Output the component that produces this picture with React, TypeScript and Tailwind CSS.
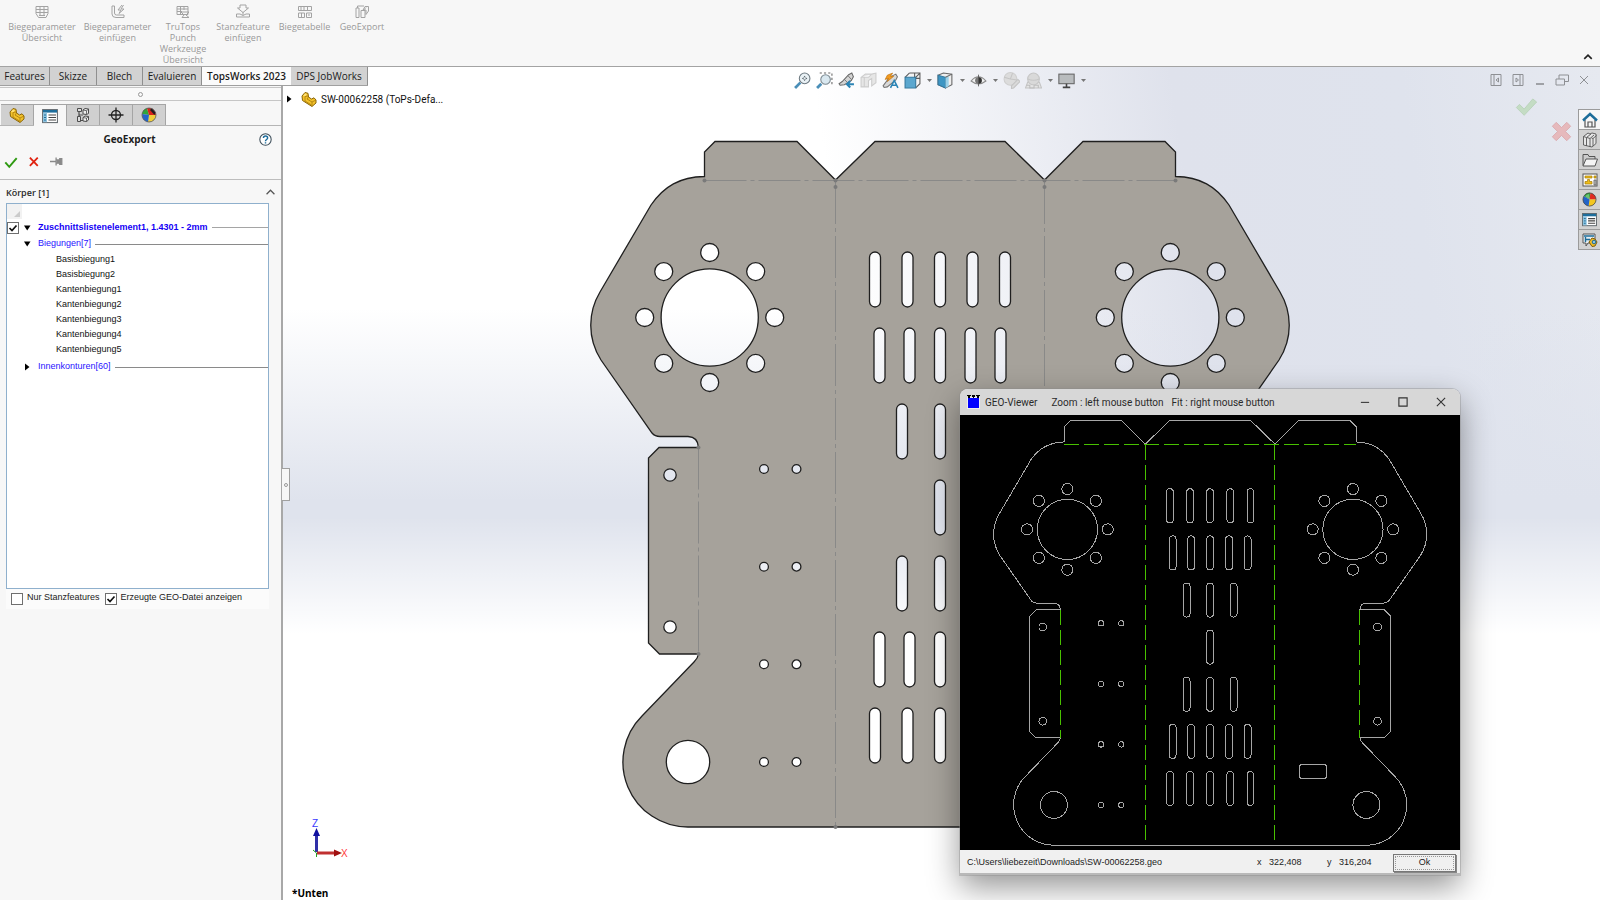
import type { ReactNode } from "react";

const circle = (cx: number, cy: number, r: number) =>
  `M${cx - r} ${cy}a${r} ${r} 0 1 0 ${r * 2} 0a${r} ${r} 0 1 0 ${-r * 2} 0Z`;

const slot = (cx: number, top: number) =>
  `M${cx - 5.5} ${top + 5.5}a5.5 5.5 0 0 1 11 0v44a5.5 5.5 0 0 1 -11 0Z`;

const flange = (cx: number, cy: number) => {
  const ring = [0, 1, 2, 3, 4, 5, 6, 7].map((i) => {
    const a = (i * Math.PI) / 4;
    return circle(cx + 65 * Math.cos(a), cy + 65 * Math.sin(a), 9);
  });
  return circle(cx, cy, 48.6) + ring.join("");
};

const OUTLINE =
  "M704.5 176.5V152L715 141.5H797L835.5 180L875 141.5H1005L1044.5 180L1083 141.5H1165L1175.5 152V176.5" +
  "C1200 177 1216 186 1229 205L1280 292C1292 312 1293 338 1279 360L1228 433Q1225 436.5 1220 436.5H1192" +
  "Q1182 437 1181.5 447.5H1221L1231.5 458V643L1220.5 654H1181.5Q1182 658 1186 662L1238 716" +
  "A65 65 0 0 1 1192 827H688A65 65 0 0 1 642 716L694 662Q698 658 698.5 654H659.5L648.5 643V458L659 447.5H698.5" +
  "Q698 437 688 436.5H660Q655 436.5 652 433L601 360C587 338 588 312 600 292L651 205C664 186 680 177 704.5 176.5Z";

const WIDE = [875, 907.5, 940, 972.5, 1005];
const MID = [879.5, 909.5, 940, 970.5, 1000.5];
const NARROW = [902, 940, 978];
const SLOT_ROWS = [WIDE, MID, NARROW, [940], NARROW, MID, WIDE];

const PLATE = [
  OUTLINE,
  flange(709.7, 317.5),
  flange(1170.3, 317.5),
  ...SLOT_ROWS.flatMap((row, i) => row.map((x) => slot(x, 252 + i * 76))),
  ...[469, 566.7, 664.3, 762].flatMap((y) => [circle(764, y, 4.4), circle(796.5, y, 4.4)]),
  ...[475, 627].flatMap((y) => [circle(670, y, 6.2), circle(1210, y, 6.2)]),
  circle(688, 762, 21.7),
  circle(1192, 762, 21.7),
  "M1088 697h36q4 0 4 4v14q0 4-4 4h-36q-4 0-4-4v-14q0-4 4-4Z",
].join("");

const BENDS = ["M704.5 180.5H1175.5", "M835.5 182V827", "M1044.5 182V827", "M698.5 447.5V654", "M1181.5 447.5V654"];

const BEND_ENDS = [
  [704.5, 180.5], [835.5, 180.5], [835.5, 187], [1044.5, 180.5], [1044.5, 187],
  [1175.5, 180.5], [698.5, 447.5], [698.5, 654], [835.5, 827],
];

function Svg({ size = 16, className = "", children }: { size?: number; className?: string; children: ReactNode }) {
  return (
    <svg width={size} height={size} viewBox="0 0 16 16" fill="none" className={`block shrink-0 ${className}`} aria-hidden="true">
      {children}
    </svg>
  );
}

/* ---------- icons ---------- */

const PartIcon = ({ size = 16 }: { size?: number }) => (
  <Svg size={size}>
    <path d="M1 5l3-3.5 3 .8.5 3.7 3 2L13 6.8l2 2.2v3L11 15.5 1.500 9.500z" fill="#f3c22b" stroke="#8a6508" strokeWidth="1" strokeLinejoin="round" />
    <path d="M4 5.500l3-.5M4 5.500V10l6.500 4M7.500 6L6 8l5 3 4-2M11 11v4" stroke="#a87b0a" strokeWidth=".8" />
    <path d="M2 5l2-2.500 2 .6L4.500 5z" fill="#ffe27a" />
  </Svg>
);

const PropsIcon = ({ size = 16 }: { size?: number }) => (
  <Svg size={size}>
    <rect x=".6" y="1.600" width="14.800" height="13" fill="#fff" stroke="#5c6368" />
    <rect x="1" y="2" width="14" height="2.600" fill="#1e6e9c" />
    <rect x="1" y="4.600" width="4" height="9.600" fill="#8fc3df" />
    <path d="M2 7h2M2 9.500h2M2 12h2" stroke="#1e6e9c" />
    <path d="M6.500 7H14M6.500 9.500H14M6.500 12H14" stroke="#444" strokeWidth="1.200" />
  </Svg>
);

const ConfigIcon = () => (
  <Svg>
    <path d="M4 4v10M4 8h4M4 13.500h5" stroke="#4c4c4c" strokeWidth="1.200" />
    <path d="M2.500 1.500h4v3h-4zM2.500 9.500h3v5h-3z" fill="#ddd" stroke="#4c4c4c" />
    <path d="M8 3l2-1.500 3.500.5v4.500L11.500 7.500 8 7zM8 10.500L10 9l3.500.5V13l-2 1.500L8 14z" fill="#eee" stroke="#4c4c4c" />
    <path d="M8 3l3.500.7 2-1.700M11.500 3.700v3.800M8 10.500l3.500.7 2-1.700M11.500 11v3.500" stroke="#4c4c4c" strokeWidth=".8" />
  </Svg>
);

const TargetIcon = () => (
  <Svg>
    <circle cx="8" cy="8" r="4.500" stroke="#222" strokeWidth="1.300" />
    <path d="M8 .5v15M.5 8h15" stroke="#222" strokeWidth="1.300" />
  </Svg>
);

const BallIcon = ({ size = 16 }: { size?: number }) => (
  <Svg size={size}>
    <path d="M8 8L2 4.500A7 7 0 0 1 9 1z" fill="#2fa53a" />
    <path d="M8 8l1-7a7 7 0 0 1 6 7z" fill="#e02b20" />
    <path d="M8 8h7a7 7 0 0 1-8 7z" fill="#f3c620" />
    <path d="M8 8l-1 7A7 7 0 0 1 2 4.500z" fill="#2264c8" />
    <path d="M3.500 4.500a6 6 0 0 1 4-2.500L8 8z" fill="#fff" opacity=".3" />
    <circle cx="8" cy="8" r="7" stroke="#444" strokeWidth=".8" />
  </Svg>
);

const DisplayManagerIcon = () => (
  <Svg>
    <path d="M8 8L1.200 7A7 7 0 0 1 6 1.300z" fill="#2fa53a" />
    <path d="M8 8L6 1.300A7 7 0 0 1 15 8z" fill="#d9241b" />
    <path d="M9 3l2-1.800 3.500 4.300L13.500 8z" fill="#1f1f1f" />
    <path d="M8 8h7a7 7 0 0 1-8 7z" fill="#f0cf3a" />
    <path d="M8 8l-1 7A7 7 0 0 1 1.200 7z" fill="#2264c8" />
    <circle cx="8" cy="8" r="7" stroke="#555" strokeWidth=".8" />
  </Svg>
);

const HelpIcon = () => (
  <Svg size={13}>
    <circle cx="8" cy="8" r="7" fill="#fff" stroke="#3d4e5a" strokeWidth="1.300" />
    <path d="M5.500 6.200C5.500 3 10.600 3 10.600 6.200 10.600 8 8 8 8 10M8 11.500v1.500" stroke="#1c6c9c" strokeWidth="1.800" />
  </Svg>
);

const ribbonItems: { label: string; width: string; icon: ReactNode }[] = [
  {
    label: "Biegeparameter Übersicht",
    width: "w-[76px]",
    icon: <path d="M2 2.500h12v7l-2 4H4.500l-2.500-4zM2 5.500h12M2 8.500h12M6 2.500V12M10 2.500V12M5 11.500h6" />,
  },
  {
    label: "Biegeparameter einfügen",
    width: "w-[75px]",
    icon: <path d="M2 2h2.500v7q0 2 2 2H14v2.500H6Q2 13.500 2 10zM12 1L8 6h3L9 9.500 14 5h-3l2.500-4" />,
  },
  {
    label: "TruTops Punch Werkzeuge Übersicht",
    width: "w-[56px]",
    icon: <path d="M2 2.500h11v8H2zM2 5h11M2 7.500h5M5.500 2.500v8M9 2.500V6M6 8h8l-3 3 3 2.500H7L9 11z" />,
  },
  {
    label: "Stanzfeature einfügen",
    width: "w-[64px]",
    icon: <path d="M5 1h6v3h2.500L8 8.500 2.500 4H5zM1.500 10H5q3 3 6 0h3.500v3h-13zM8 8v3" />,
  },
  {
    label: "Biegetabelle",
    width: "w-[59px]",
    icon: <path d="M1.500 2.500h13v4h-13zM1.500 9h6v4.500h-6zM9.500 9h5v4.500h-5zM4 2.500v4M7 2.500v4M10.500 2.500v4M4.500 9v4.500M11 11h2" />,
  },
  {
    label: "GeoExport",
    width: "w-[56px]",
    icon: <path d="M2 4h3v9.500H2zM7 6.500h4v7H7zM3.500 4V2H10M11 2.500h3.500V7L12 10.500V6H9zM12 3.500l-3 3" />,
  },
];

const ribbonTabs = [
  { label: "Features", width: "w-[50px]" },
  { label: "Skizze", width: "w-[47px]" },
  { label: "Blech", width: "w-[46px]" },
  { label: "Evaluieren", width: "w-[59px]" },
  { label: "TopsWorks 2023", width: "w-[89px]", active: true },
  { label: "DPS JobWorks", width: "w-[77px]" },
];

const bends = [
  "Basisbiegung1", "Basisbiegung2", "Kantenbiegung1", "Kantenbiegung2",
  "Kantenbiegung3", "Kantenbiegung4", "Kantenbiegung5",
];

const viewTools: { name: string; caret?: boolean; icon: ReactNode }[] = [
  {
    name: "Zoom to fit",
    icon: (
      <>
        <path d="M1 15l5-5" stroke="#4a8fb8" strokeWidth="2.600" />
        <circle cx="10" cy="6" r="5" fill="#e9f1f5" stroke="#6e7a82" />
        <path d="M10 3.500l-1 1.500h2zM10 8.500L9 7h2zM7.500 6L9 5v2zM12.500 6L11 5v2z" fill="#4c575e" />
      </>
    ),
  },
  {
    name: "Zoom to area",
    icon: (
      <>
        <path d="M3.500 1h11.500v12" stroke="#666" strokeDasharray="2 2" />
        <path d="M1 15l4-4" stroke="#4a8fb8" strokeWidth="2.600" />
        <circle cx="9" cy="7" r="4.500" fill="#d9e8f0" stroke="#7c8990" />
      </>
    ),
  },
  {
    name: "Previous view",
    icon: (
      <>
        <path d="M1 11l3-2 6-6.500 3-1.500 1.500 3.500-2 3.500-6.500 4-4 .5z" fill="#d4d4d4" stroke="#6a6a6a" />
        <path d="M6 7l3 3M9.500 3.500l3 3.500" stroke="#6a6a6a" strokeWidth=".8" />
        <path d="M15 11.500H9M11.500 8.500l-3 3 3 3" stroke="#2b84b5" strokeWidth="2" />
      </>
    ),
  },
  {
    name: "Section view",
    icon: <path d="M1 5l4-3h6l4-1v9l-4 3V6L8 8v6H1zM1 5h7l3-3M4 5v9" fill="#e6e6e6" stroke="#cdcdcd" />,
  },
  {
    name: "Dynamic annotation views",
    icon: (
      <>
        <path d="M1 13l6-8 6-3 1.500 2.500-1.500 3L5 14l-3 .5z" fill="#d8d8d8" stroke="#777" />
        <path d="M3 7l2-4 5-2-2 3h3L5 9l1-3z" fill="#f29b21" stroke="#b96d0a" strokeWidth=".6" />
        <path d="M8 15l3.500-7L15 15M9.500 12.500h4" stroke="#2b84b5" strokeWidth="1.500" />
      </>
    ),
  },
  {
    name: "View orientation",
    caret: true,
    icon: (
      <>
        <path d="M5 1h10v10l-4 4M5 1L1 5M15 1l-4 4M10 1v5M15 6h-4" stroke="#5c5c5c" fill="#f3f3f3" />
        <path d="M1 5h10v10H1z" fill="#5ba7cf" stroke="#33789e" />
      </>
    ),
  },
  {
    name: "Display style",
    caret: true,
    icon: (
      <>
        <path d="M1 3l5-2 8 1v10l-6 3-7-3z" fill="#eee" stroke="#666" />
        <path d="M1 3l7 2v10l-7-3z" fill="#3d95c3" stroke="#33789e" />
        <path d="M8 5l3-1v9.500L8 15z" fill="#9bd0e8" />
        <path d="M8 5l6-3" stroke="#666" />
      </>
    ),
  },
  {
    name: "Hide/show items",
    caret: true,
    icon: (
      <>
        <path d="M1 8.500Q8 .5 15 8.500 8 14 1 8.500z" fill="#f0f0f0" stroke="#8c8c8c" />
        <circle cx="8" cy="8" r="3.200" fill="#777" />
        <path d="M8 5a3 3 0 0 1 0 6z" fill="#333" />
        <path d="M8 2.500v11" stroke="#555" strokeWidth=".8" />
      </>
    ),
  },
  {
    name: "Edit appearance",
    icon: (
      <>
        <circle cx="7" cy="6.500" r="6" fill="#dcdcdc" stroke="#cfcfcf" />
        <path d="M7 6.500L1 5M7 6.500L9 1M7 6.500l6 1" stroke="#c5c5c5" />
        <path d="M8 13l6-6 2 2-6 6-2 .5z" fill="#d9d9d9" stroke="#c3c3c3" />
      </>
    ),
  },
  {
    name: "Apply scene",
    caret: true,
    icon: (
      <>
        <path d="M2.500 9.500L.5 15h15l-2-5.500z" fill="#e4e4e4" stroke="#c3c3c3" />
        <path d="M1.500 12.500h3V15h4v-2.500h4V15" stroke="#bdbdbd" />
        <circle cx="8" cy="6.500" r="5.500" fill="#d9d9d9" stroke="#c6c6c6" />
        <path d="M2.500 6.500Q8 9 13.500 6.500" stroke="#c6c6c6" />
      </>
    ),
  },
  {
    name: "View settings",
    caret: true,
    icon: (
      <>
        <rect x=".8" y="2" width="14.400" height="9" fill="#b9bcbe" stroke="#666" />
        <path d="M8 11v3M4.500 14.500h7" stroke="#444" strokeWidth="1.500" />
      </>
    ),
  },
];

const windowTools: { name: string; icon: ReactNode }[] = [
  { name: "Collapse left", icon: <path d="M3 2.500h10v11H3zM6 2.500v11M10.500 6v4M8 8l2.500-2v4z" /> },
  { name: "Collapse right", icon: <path d="M3 2.500h10v11H3zM10 2.500v11M6 6v4l2.500-2z" /> },
  { name: "Minimize", icon: <path d="M4 12h8" strokeWidth="1.600" /> },
  { name: "Restore", icon: <path d="M2 7h8.500v6H2zM5 7V3h9.500v6.500h-4" /> },
  { name: "Close", icon: <path d="M4 4l8 8M12 4l-8 8" /> },
];

const taskTabs: { name: string; icon: ReactNode }[] = [
  {
    name: "Resources",
    icon: (
      <Svg>
        <path d="M3 8v7h10V8M6 15v-5h4v5" stroke="#555" strokeWidth="1.200" />
        <path d="M1 8.500l7-6.500 7 6.500" stroke="#1d6d99" strokeWidth="2.400" />
      </Svg>
    ),
  },
  {
    name: "Design Library",
    icon: (
      <Svg>
        <path d="M1.500 4.500L6 1l2 1 2-1 4 1v9.500L10 15 1.500 13zM1.500 4.500l3 1v8.500M4.500 5.500L9 2M5 5.500l3 1v8.500M8 6.500L12 3M9.500 6l1.500.5V14M11 6.500l3.500-3" fill="#e6e6e6" stroke="#555" strokeWidth=".9" />
      </Svg>
    ),
  },
  {
    name: "File Explorer",
    icon: (
      <Svg>
        <path d="M1 13.500V2.500h5l1 2h6v3" fill="#ccc" stroke="#555" />
        <path d="M1 14l3-7h11.500L13 14z" fill="#f4f4f4" stroke="#555" />
      </Svg>
    ),
  },
  {
    name: "View Palette",
    icon: (
      <Svg>
        <rect x="1" y="2" width="14" height="12" fill="#fff" stroke="#555" />
        <path d="M3 4h7v2H3zM5.500 7.500h2v2H10v2.500H3V9.500h2.500zM12 4h2v2h-2z" fill="#f0bd17" stroke="#a37b06" strokeWidth=".7" />
        <path d="M12 8h2v5h-2z" fill="#ccc" stroke="#555" strokeWidth=".8" />
      </Svg>
    ),
  },
  { name: "Appearances", icon: <BallIcon size={15} /> },
  { name: "Custom Properties", icon: <PropsIcon size={15} /> },
  {
    name: "Forum",
    icon: (
      <Svg>
        <path d="M1 2h12v9H6l-2 3v-3H1z" fill="#e8eef1" stroke="#555" />
        <path d="M2 4h10M3.500 5v5M3 7.500h5" stroke="#1d6d99" strokeWidth="1.400" />
        <path d="M7 10l3-4 3 1 2 3-2 4-3 .5z" fill="#f3bd23" stroke="#805d07" />
        <circle cx="12" cy="10" r="1.800" fill="#8fc3df" stroke="#1d6d99" />
      </Svg>
    ),
  },
];

/* ---------- controls ---------- */

const SYSTEM_FONT = '"Liberation Sans", Arial, sans-serif';
const CAPTION_FONT = 'Roboto, "Open Sans", sans-serif';

function CheckBox({ id, checked, label }: { id: string; checked?: boolean; label?: string }) {
  return (
    <span className="relative block h-3 w-3 shrink-0">
      <input
        id={id}
        type="checkbox"
        defaultChecked={checked}
        aria-label={label}
        className="peer block h-3 w-3 appearance-none border border-[#6f6f6f] bg-white"
      />
      <svg viewBox="0 0 12 12" className="pointer-events-none absolute inset-0 hidden h-3 w-3 peer-checked:block" aria-hidden="true">
        <path d="M2.500 6l2.500 2.500L9.500 3.500" fill="none" stroke="#111" strokeWidth="1.700" />
      </svg>
    </span>
  );
}

function Twisty({ open, label }: { open?: boolean; label: string }) {
  return (
    <button type="button" aria-label={label} aria-expanded={!!open} className="block h-2 w-2 shrink-0">
      <svg viewBox="0 0 8 8" className="h-2 w-2" aria-hidden="true">
        <path d={open ? "M1 1.500h6.500L4.200 6.500z" : "M2 .5v7L6.500 4z"} fill="#000" />
      </svg>
    </button>
  );
}

function Ribbon() {
  return (
    <header className="flex h-[67px] shrink-0 items-start justify-between border-b border-[#a3a3a3] bg-[#f7f7f7]">
      <div className="flex pl-1">
        {ribbonItems.map((item) => (
          <button
            key={item.label}
            type="button"
            disabled
            className={`flex ${item.width} shrink-0 flex-col items-center gap-px pt-1 text-[9px] leading-[11px] text-[#999]`}
          >
            <Svg size={16} className="stroke-[#a3a3a3]">
              {item.icon}
            </Svg>
            <span>{item.label}</span>
          </button>
        ))}
      </div>
      <button type="button" aria-label="Collapse ribbon" className="self-end p-1 pr-[7px]">
        <Svg size={10}>
          <path d="M2 11l6-6 6 6" stroke="#222" strokeWidth="2.600" />
        </Svg>
      </button>
    </header>
  );
}

function RibbonTabs() {
  return (
    <nav className="absolute left-0 top-0 z-10 flex h-[19px] border-b border-[#a0a0a0]">
      {ribbonTabs.map((tab) => (
        <button
          key={tab.label}
          type="button"
          className={`${tab.width} whitespace-nowrap text-center text-[10px] leading-4 text-[#1b1b1b] ${
            tab.active ? "bg-[#fbfbfb] font-semibold" : "border-r border-[#8f8f8f] bg-[#d2d2d2] font-medium"
          }`}
        >
          {tab.label}
        </button>
      ))}
    </nav>
  );
}

function PropertyPane() {
  const managers = [
    { name: "FeatureManager", icon: <PartIcon /> },
    { name: "PropertyManager", icon: <PropsIcon />, active: true },
    { name: "ConfigurationManager", icon: <ConfigIcon /> },
    { name: "DimXpertManager", icon: <TargetIcon /> },
    { name: "DisplayManager", icon: <DisplayManagerIcon /> },
  ];
  return (
    <aside className="relative flex w-[283px] shrink-0 flex-col border-r-2 border-[#a8a8a8] bg-[#f7f7f7] pt-5">
      <div className="flex h-[14px] items-center justify-center border-y border-[#c6c6c6] bg-[#f9f9f9]">
        <span className="h-[5px] w-[5px] rounded-full border border-[#999]" />
      </div>
      <div className="mt-[3px] flex h-[22px] border-b border-[#b5b5b5] pl-px">
        {managers.map((m) => (
          <button
            key={m.name}
            type="button"
            aria-label={m.name}
            className={`flex w-[33px] items-center justify-center border-r border-t border-[#a5a5a5] ${
              m.active ? "-mb-px bg-[#f7f7f7]" : "bg-[#d0d0d0]"
            }`}
          >
            {m.icon}
          </button>
        ))}
      </div>

      <div className="flex h-[27px] items-center pr-[9px]">
        <h1 className="flex-1 text-center text-[10px] font-bold text-[#1d1d1d]">GeoExport</h1>
        <button type="button" aria-label="Hilfe">
          <HelpIcon />
        </button>
      </div>
      <div className="flex h-[27px] items-start gap-[10px] border-b border-[#bdbdbd] pl-1 pt-0.5">
        <button type="button" aria-label="OK">
          <Svg size={14}>
            <path d="M1.500 8.500l4.500 5 8.500-10" stroke="#2f9a12" strokeWidth="2.200" />
          </Svg>
        </button>
        <button type="button" aria-label="Abbrechen">
          <Svg size={12}>
            <path d="M2.500 3.500l10.500 11M13 3.500L2.500 14.500" stroke="#e0220f" strokeWidth="2.400" />
          </Svg>
        </button>
        <button type="button" aria-label="Anheften">
          <Svg size={13}>
            <path d="M0 8h7M7.500 3v10M8 6h3.500v4H8M12 4.500h2.500v7H12z" fill="#8a8a8a" stroke="#8a8a8a" strokeWidth="1.600" />
          </Svg>
        </button>
      </div>

      <div className="flex h-[23px] items-center justify-between pl-1.5 pr-1.5 pt-0.5">
        <h2 className="text-[9px] font-semibold text-[#2b2b2b]">Körper [1]</h2>
        <button type="button" aria-label="Einklappen">
          <Svg size={9}>
            <path d="M1 11l7-7 7 7" stroke="#555" strokeWidth="2.200" />
          </Svg>
        </button>
      </div>

      <div
        className="ml-1.5 mr-3 flex h-[386px] shrink-0 flex-col border border-[#8fb0cd] bg-white text-[9px] text-[#111]"
        style={{ fontFamily: SYSTEM_FONT }}
      >
        <div className="flex h-[15px] w-[15px] items-end justify-end bg-[#f2f2f2] p-0.5">
          <svg viewBox="0 0 6 6" className="h-1.5 w-1.5" aria-hidden="true">
            <path d="M6 0v6H0z" fill="#cbcbcb" />
          </svg>
        </div>
        <div className="flex h-[17px] items-center text-[#1500f5]">
          <CheckBox id="cutlist" checked label="Zuschnittslistenelement1" />
          <span className="ml-1">
            <Twisty open label="Zuschnittslistenelement1" />
          </span>
          <span className="ml-[7px] mr-1 whitespace-nowrap font-bold">Zuschnittslistenelement1, 1.4301 - 2mm</span>
          <span className="h-px flex-1 bg-[#a5a5a5]" />
        </div>
        <div className="flex h-4 items-center pl-4 text-[#2a14ff]">
          <Twisty open label="Biegungen" />
          <span className="ml-[7px] mr-1">Biegungen[7]</span>
          <span className="h-px flex-1 bg-[#8a8a8a]" />
        </div>
        <ul className="pl-[49px] leading-[15px]">
          {bends.map((b) => (
            <li key={b}>{b}</li>
          ))}
        </ul>
        <div className="mt-0.5 flex h-4 items-center pl-4 text-[#2a14ff]">
          <Twisty label="Innenkonturen" />
          <span className="ml-[7px] mr-1">Innenkonturen[60]</span>
          <span className="h-px flex-1 bg-[#8a8a8a]" />
        </div>
      </div>

      <div
        className="ml-1.5 mr-3 flex h-5 items-center bg-[#fbfbfb] pl-[5px] text-[9px] leading-4 text-[#222]"
        style={{ fontFamily: SYSTEM_FONT }}
      >
        <CheckBox id="punch-only" />
        <label htmlFor="punch-only" className="ml-1 mr-[5px] whitespace-nowrap pb-1">Nur Stanzfeatures</label>
        <CheckBox id="show-geo" checked />
        <label htmlFor="show-geo" className="ml-1 whitespace-nowrap pb-1">Erzeugte GEO-Datei anzeigen</label>
      </div>

      <button
        type="button"
        aria-label="Bereich verbergen"
        className="absolute -right-[9px] top-[401px] z-10 flex h-[33px] w-2 items-center justify-center border border-l-0 border-[#a0a0a0] bg-[#f7f7f7]"
      >
        <span className="h-1 w-1 rounded-full border border-[#999]" />
      </button>
    </aside>
  );
}

function GeoViewer() {
  return (
    <section className="absolute bottom-[25px] right-[140px] flex w-[500px] flex-col rounded-t-lg bg-[#f0f0f0] shadow-[0_12px_32px_rgba(0,0,0,0.42)] ring-1 ring-[#8b8b8b]/40">
      <div
        className="flex h-[26px] items-center rounded-t-lg bg-[#d7d7d7] pl-[7px] text-[10px] text-[#2a2a2a]"
        style={{ fontFamily: CAPTION_FONT }}
      >
        <svg viewBox="0 0 13 14" className="h-[14px] w-[13px]" aria-hidden="true">
          <path d="M0 2h13v12H0z" fill="#eee" />
          <path d="M1 3h11v10H1z" fill="#0000ff" />
          <path d="M0 0h4v1H0zM5 0h3v2H5zM9 0h4v1H9zM1 1h2v2H1zM10 1h2v2h-2zM6 2h1v1H6z" fill="#000" />
        </svg>
        <h2 className="ml-[5px]">GEO-Viewer</h2>
        <span className="ml-[14px]">Zoom : left mouse button</span>
        <span className="ml-2">Fit : right mouse button</span>
        <div className="ml-auto flex items-center gap-[26px] pr-[13px]">
          <button type="button" aria-label="Minimieren">
            <Svg size={12}><path d="M2.500 8.500h11" stroke="#333" strokeWidth="1.400" /></Svg>
          </button>
          <button type="button" aria-label="Maximieren">
            <Svg size={12}><path d="M2.500 2.500h11v11h-11z" stroke="#333" strokeWidth="1.500" /></Svg>
          </button>
          <button type="button" aria-label="Schließen">
            <Svg size={12}><path d="M2.500 2.500l11 11M13.500 2.500l-11 11" stroke="#333" strokeWidth="1.500" /></Svg>
          </button>
        </div>
      </div>
      <svg viewBox="536.500 133 806.500 701.600" className="block w-full bg-black" role="img" aria-label="SW-00062258.geo">
        <g fill="none" strokeWidth="1" shapeRendering="crispEdges">
          <path d={PLATE} stroke="#a6a6a6" vectorEffect="non-scaling-stroke" />
          {BENDS.map((d) => (
            <path key={d} d={d} stroke="#48c000" strokeDasharray="15 5" vectorEffect="non-scaling-stroke" />
          ))}
        </g>
      </svg>
      <div
        className="flex h-[25px] items-center border-b-2 border-[#b9b9b9] pl-[7px] pt-0.5 text-[9px] text-[#1c1c1c]"
        style={{ fontFamily: SYSTEM_FONT }}
      >
        <span className="flex-1">C:\Users\liebezeit\Downloads\SW-00062258.geo</span>
        <span className="w-3">x</span>
        <span className="w-[58px]">322,408</span>
        <span className="w-3">y</span>
        <span className="w-[54px]">316,204</span>
        <button type="button" className="mr-1 h-[18px] w-[63px] border border-[#777] bg-[#f0f0f0] shadow-[1px_1px_0_#888] outline-1 outline-dotted -outline-offset-3 outline-[#999]">
          Ok
        </button>
      </div>
    </section>
  );
}

function Viewport() {
  return (
    <main className="relative min-w-0 flex-1 overflow-hidden bg-[linear-gradient(180deg,transparent_54%,#ffffff_68%),linear-gradient(180deg,transparent_29%,#dfe3ed_52%),linear-gradient(82deg,#ffffff_45%,#dfe2ec_70%,#dfe3ed_86%,#e6e9f0_100%)]">
      <svg viewBox="283 67 1317 833" className="absolute inset-0 h-full w-full" role="img" aria-label="SW-00062258">
        <path d={PLATE} fill="#a6a29b" fillRule="evenodd" stroke="#1f1f1f" strokeWidth="1.300" />
        {BENDS.map((d) => (
          <path key={d} d={d} fill="none" stroke="#898988" strokeDasharray="42 4 4 4" />
        ))}
        {BEND_ENDS.map(([x, y]) => (
          <circle key={`${x}-${y}`} cx={x} cy={y} r="2" fill="#7a7a7a" />
        ))}
        <g>
          <path d="M316.500 852V834" stroke="#3030a8" strokeWidth="3" />
          <path d="M316.500 828l3.500 8h-7z" fill="#1010a0" />
          <path d="M317 853h17" stroke="#c03030" strokeWidth="3" />
          <path d="M342 853l-8-3.500v7z" fill="#a01010" />
          <path d="M313 850l3.500 3v4" stroke="#20a020" fill="none" />
          <text x="312" y="827" fontSize="10" fill="#3a3aff" fontFamily="Liberation Sans">Z</text>
          <text x="341" y="857" fontSize="10" fill="#ff3a3a" fontFamily="Liberation Sans">X</text>
        </g>
      </svg>

      <div className="relative flex h-[26px] items-center pl-[511px]">
        <div className="flex items-center gap-[5px]">
          {viewTools.map((t) => (
            <button key={t.name} type="button" aria-label={t.name} className="flex items-center gap-[6px]">
              <Svg size={17}>{t.icon}</Svg>
              {t.caret && (
                <svg viewBox="0 0 5 3" className="h-[3px] w-[5px]" aria-hidden="true">
                  <path d="M0 0h5L2.500 3z" fill="#777" />
                </svg>
              )}
            </button>
          ))}
        </div>
        <div className="ml-auto flex gap-[6px] pr-2">
          {windowTools.map((t) => (
            <button key={t.name} type="button" aria-label={t.name}>
              <Svg size={16} className="stroke-[#8e9094]">{t.icon}</Svg>
            </button>
          ))}
        </div>
      </div>

      <div className="relative flex items-start justify-between">
        <div className="flex h-3 items-center gap-2 pl-0.5 text-[10px] text-[#111]" style={{ fontFamily: CAPTION_FONT }}>
          <Twisty label="SW-00062258" />
          <span className="flex items-center gap-1">
            <PartIcon />
            <span>SW-00062258 (ToPs-Defa...</span>
          </span>
        </div>
        <div className="flex items-start">
          <button type="button" aria-label="Bestätigen" className="mt-0.5">
            <Svg size={25}>
              <path d="M1.500 8l2-2 3 3L12 2.500l2.500 2L6.500 13z" fill="#c4dcc4" stroke="#b5cfb5" strokeWidth=".5" />
            </Svg>
          </button>
          <button type="button" aria-label="Verwerfen" className="ml-3 mt-7">
            <Svg size={21}>
              <path d="M1 4l3-3 4 4 4-4 3 3-4 4 4 4-3 3-4-4-4 4-3-3 4-4z" fill="#e6b9bc" stroke="#d9a5a9" strokeWidth=".6" />
            </Svg>
          </button>
          <div className="ml-[6px] mt-4 flex flex-col border-l border-t border-[#9b9b9b]">
            {taskTabs.map((t, i) => (
              <button
                key={t.name}
                type="button"
                aria-label={t.name}
                className={`flex h-5 w-[21px] items-center justify-center border-b border-[#9b9b9b] ${i === 0 ? "bg-[#f7f7f7]" : "bg-[#d2d2d2]"}`}
              >
                {t.icon}
              </button>
            ))}
          </div>
        </div>
      </div>

      <p className="absolute bottom-px left-[9px] text-[10px] font-bold leading-3 text-black">*Unten</p>
      <GeoViewer />
    </main>
  );
}

export default function App() {
  return (
    <div className="flex h-screen w-full flex-col overflow-hidden bg-[#f7f7f7]" style={{ fontFamily: '"Open Sans", "Noto Sans", sans-serif' }}>
      <Ribbon />
      <div className="relative flex min-h-0 flex-1">
        <RibbonTabs />
        <PropertyPane />
        <Viewport />
      </div>
    </div>
  );
}
